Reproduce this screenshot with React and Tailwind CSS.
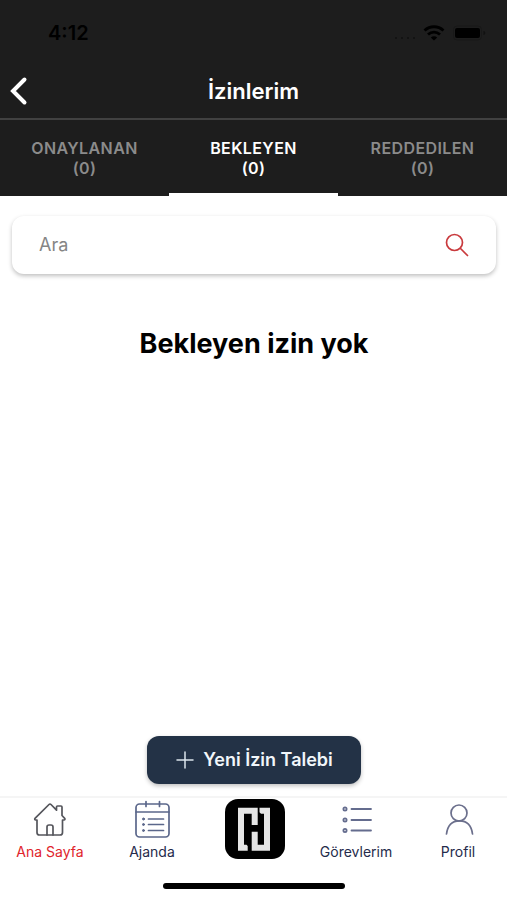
import React, { useState } from 'react';

const tabs = [
  { id: 'approved', label: 'ONAYLANAN', count: 0 },
  { id: 'pending', label: 'BEKLEYEN', count: 0 },
  { id: 'rejected', label: 'REDDEDILEN', count: 0 },
];

const HomeIcon = () => (
  <svg className="h-10 w-10" viewBox="0 0 40 40" fill="none" stroke="#55565c" strokeWidth="1.7" strokeLinejoin="round" strokeLinecap="round">
    <path d="M7 20V32.500a2.500 2.500 0 0 0 2.500 2.500h20.500a2.500 2.500 0 0 0 2.500-2.500V20h1.500a1 1 0 0 0 .7-1.700L32 15.500V7a1 1 0 0 0-1-1h-3.500a1 1 0 0 0-1 1v3.200l-5.500-5.700a1.400 1.400 0 0 0-2 0L5 18.300A1 1 0 0 0 5.700 20z" />
    <path d="M17 35V27a2 2 0 0 1 2-2h2a2 2 0 0 1 2 2v8" />
  </svg>
);

const AgendaIcon = () => (
  <svg className="h-10 w-10" viewBox="0 0 40 40" fill="none" stroke="#5b678b" strokeWidth="1.7" strokeLinecap="round">
    <rect x="4" y="4" width="33" height="33" rx="3.500" />
    <path d="M4 12h33M14 1.500v5M27.500 1.500v5M16.500 19h15M16.500 24.500h15M16.500 30.500h15" />
    <g fill="#5b678b" strokeWidth="1">
      <circle cx="11.500" cy="19" r="1" />
      <circle cx="11.500" cy="24.500" r="1" />
      <circle cx="11.500" cy="30.500" r="1" />
    </g>
  </svg>
);

const TasksIcon = () => (
  <svg className="h-10 w-10" viewBox="0 0 40 40" fill="none" stroke="#646c8e" strokeWidth="1.8" strokeLinecap="round">
    <path d="M15.500 9h19.500M15.500 20h19.500M15.500 30.500h19.500" />
    <circle cx="9" cy="9" r="1.600" />
    <circle cx="9" cy="20" r="1.600" />
    <circle cx="9" cy="30.500" r="1.600" />
  </svg>
);

const ProfileIcon = () => (
  <svg className="h-10 w-10" viewBox="0 0 40 40" fill="none" stroke="#6b6f8c" strokeWidth="1.700" strokeLinecap="round">
    <circle cx="21" cy="13" r="8" />
    <path d="M8.500 34C9.500 26 14 20.800 21.500 20.800S33.500 26 34.500 34" />
  </svg>
);

const StatusBar = () => (
  <div className="flex h-[66px] items-center justify-between pr-[18px] pl-12 text-black">
    <span className="text-xl font-semibold">4:12</span>
    <div className="flex items-center gap-2">
      <svg className="h-5 w-5" viewBox="0 0 20 20" fill="#101010">
        <circle cx="1" cy="15" r=".9" />
        <circle cx="7" cy="15" r=".9" />
        <circle cx="13" cy="15" r=".9" />
        <circle cx="19" cy="15" r=".9" />
      </svg>
      <svg className="h-4 w-[22px]" viewBox="0 0 22 16" fill="none" stroke="#000000" strokeWidth="2.800">
        <path d="M1.500 5.500C7 .5 15 .5 20.500 5.500M5 9.500c3.500-3.200 8.500-3.200 12 0" />
        <path d="M11 15.500 7.800 12.500c1.800-1.700 4.600-1.700 6.400 0z" fill="#000000" stroke="none" />
      </svg>
      <svg className="h-4 w-9" viewBox="0 0 36 16">
        <rect x=".5" y="1" width="28" height="14" rx="3.500" fill="none" stroke="#181818" />
        <rect x="2" y="3" width="25" height="10" rx="2" fill="#000000" />
        <path d="M30.500 6v4c1.200-.4 1.800-1.200 1.800-2s-.6-1.600-1.800-2z" fill="#111111" />
      </svg>
    </div>
  </div>
);

const NavItem = ({ label, active, children }) => (
  <a href="#" className="flex flex-col items-center gap-0.5 pt-0.5">
    {children}
    <span className={`text-sm leading-5 ${active ? 'text-[#e0242b]' : 'text-[#252b4b]'}`}>{label}</span>
  </a>
);

const App = () => {
  const [activeTab, setActiveTab] = useState('pending');
  const [query, setQuery] = useState('');

  return (
    <div className="flex min-h-screen flex-col bg-white font-['Inter',sans-serif]">
      <header className="bg-[#1d1d1d]">
        <StatusBar />

        {/* Title bar */}
        <div className="grid h-[54px] grid-cols-[40px_1fr_40px] items-center border-b-2 border-[#414141] pb-0.5">
          <button type="button" aria-label="Geri" className="pl-2">
            <svg className="h-8 w-6" viewBox="0 0 24 32" fill="none" stroke="#ffffff" strokeWidth="4" strokeLinecap="round">
              <path d="M16.500 4.500 5 16l11.500 11.500" />
            </svg>
          </button>
          <h1 className="text-center text-[22px] font-semibold text-white">İzinlerim</h1>
        </div>

        {/* Tabs */}
        <div className="grid grid-cols-3">
          {tabs.map((tab) => (
            <button
              key={tab.id}
              type="button"
              onClick={() => setActiveTab(tab.id)}
              className={`flex h-19 flex-col items-center border-b-[3px] pt-[18px] text-base leading-5 font-semibold tracking-wide ${
                activeTab === tab.id ? 'border-white text-white' : 'border-transparent text-[#8b8b8b]'
              }`}
            >
              <span>{tab.label}</span>
              <span>({tab.count})</span>
            </button>
          ))}
        </div>
      </header>

      <main className="flex flex-1 flex-col pt-5 pr-[11px] pb-3 pl-3">
        <label className="flex h-[58px] items-center rounded-xl bg-white px-[27px] shadow-[0_2px_4px_rgba(0,0,0,0.25)]">
          <input
            type="text"
            aria-label="Ara"
            placeholder="Ara"
            value={query}
            onChange={(e) => setQuery(e.target.value)}
            className="min-w-0 flex-1 text-lg text-black outline-none placeholder:text-[#858585]"
          />
          <svg className="h-6 w-6" viewBox="0 0 24 24" fill="none" stroke="#c93a3d" strokeWidth="1.700" strokeLinecap="round">
            <circle cx="9.500" cy="9.500" r="8" />
            <path d="m15.500 15.500 7 7" />
          </svg>
        </label>

        <h2 className="mt-[52px] text-center text-[27px] leading-9 font-bold text-black">Bekleyen izin yok</h2>

        <button
          type="button"
          className="mx-auto mt-auto flex h-12 w-[214px] items-center justify-center gap-2 rounded-xl bg-[#233246] text-lg font-semibold text-[#f1f6fa] shadow-[0_2px_4px_rgba(0,0,0,0.25)]"
        >
          <svg className="h-5 w-5" viewBox="0 0 20 20" stroke="#dce5ec" strokeWidth="1.500" strokeLinecap="round">
            <path d="M10 2v16M2 10h16" />
          </svg>
          Yeni İzin Talebi
        </button>
      </main>

      <nav className="overflow-hidden border-t-2 border-[#f5f5f5] pb-[11px]">
        <div className="-mr-0.5 -ml-px grid h-[85px] grid-cols-5">
          <NavItem label="Ana Sayfa" active>
            <HomeIcon />
          </NavItem>
          <NavItem label="Ajanda">
            <AgendaIcon />
          </NavItem>
          <a href="#" aria-label="Logo" className="flex justify-center pt-px pl-0.5">
            <svg className="h-[60px] w-[60px]" viewBox="0 0 60 60">
              <rect width="60" height="60" rx="13" fill="#000000" />
              <g fill="#e6e6e6">
                <path d="M13 8.700H32.700V26H26.700V14.700H19V45.700H21.500L22.700 47V51.700H13z" />
                <path d="M34.500 8.700H45V51.700H26.700V32.700H32.700V45.700H39V14.700H36L34.500 13.200z" />
              </g>
            </svg>
          </a>
          <NavItem label="Görevlerim">
            <TasksIcon />
          </NavItem>
          <NavItem label="Profil">
            <ProfileIcon />
          </NavItem>
        </div>
        {/* Home indicator */}
        <div className="mx-auto h-[6px] w-[182px] rounded-full bg-black" />
      </nav>
    </div>
  );
};

export default App;
